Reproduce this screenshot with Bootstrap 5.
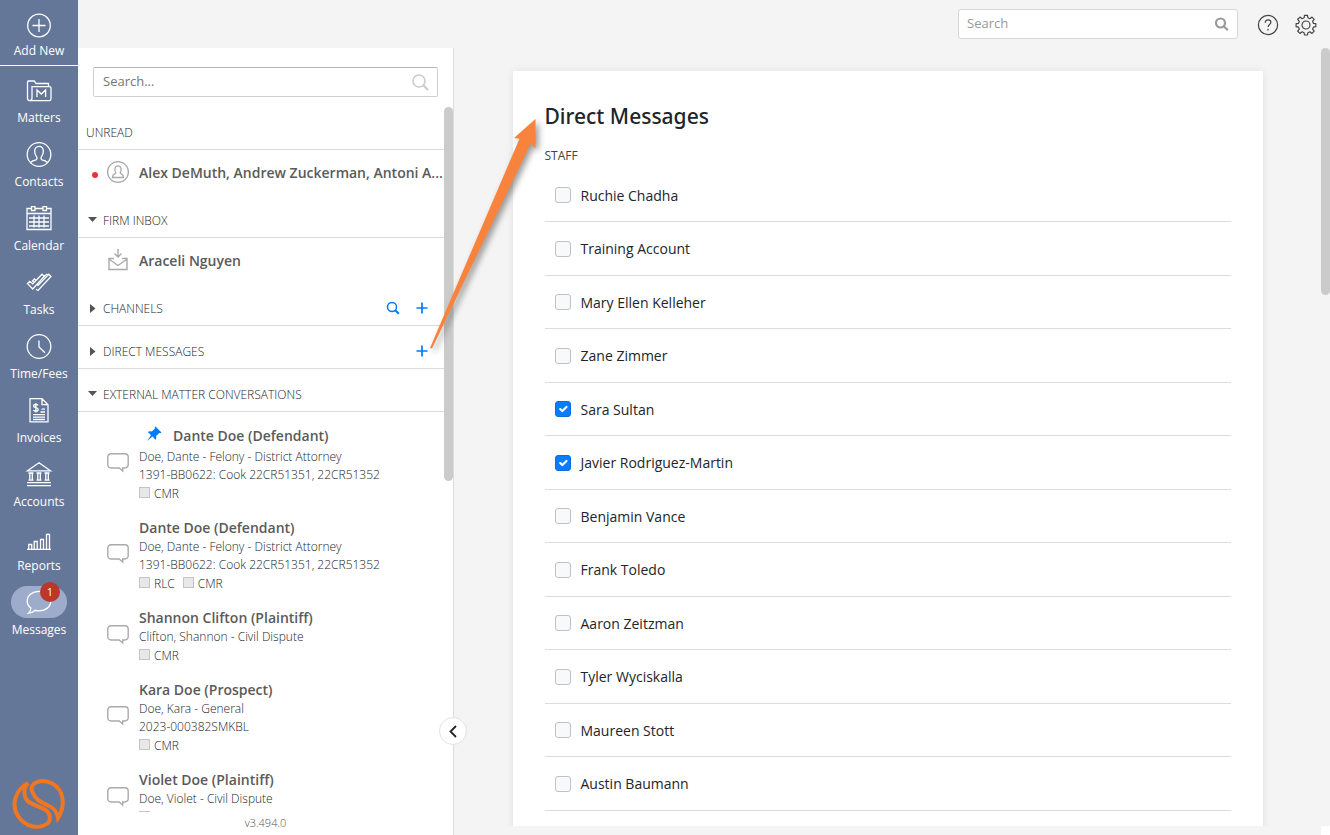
<!DOCTYPE html>
<html lang="en">
<head>
<meta charset="utf-8">
<meta name="viewport" content="width=device-width, initial-scale=1">
<title>Messages</title>
<link href="https://cdn.jsdelivr.net/npm/bootstrap@5.3.0/dist/css/bootstrap.min.css" rel="stylesheet">
<style>
  body { font-family: "Open Sans", "Noto Sans", sans-serif; font-size: 14px; background: #f4f4f4; color: #212529; }
  svg { display: block; }
  a { color: inherit; text-decoration: none; }

  /* navigation rail */
  .rail { width: 78px; background: #657798; color: #fff; }
  .rail a { font-size: 12px; line-height: 18px; height: 64px; padding-top: 6px; }
  .rail a .glyph { height: 31px; }
  .rail .add-new { height: 66px; border-bottom: 1px solid #fff; padding-top: 11px; margin-bottom: 6px; }
  .rail svg { fill: none; stroke: #fff; stroke-width: 1.3; }
  .rail .glyph-pill { width: 56px; height: 32px; border-radius: 16px; background: #9eaccc; margin: -4px 0 3px; }
  .rail .unread-count { width: 20px; height: 20px; border-radius: 50%; background: #bb372b; font-size: 11px; line-height: 20px; top: -4px; right: 7px; }
  .rail .logo { padding-bottom: 5px; }
  .rail .logo svg { stroke: #f0761f; stroke-width: 4; }

  /* top bar */
  .topbar { height: 48px; padding: 0 13px 0 0; gap: 16px; color: #444; }
  .topbar .find { width: 280px; height: 30px; border: 1px solid #d6d6d6; border-radius: 3px; background: #fff; padding: 0 8px; margin-right: 3px; }
  .find input { font-size: 13px; outline: 0; min-width: 0; background: none; }
  .find input::placeholder { color: #757575; opacity: 1; }
  .topbar .find input::placeholder { color: #999; }
  .topbar a { padding-top: 2px; }

  /* conversation panel */
  .panel { width: 376px; background: #fff; border-right: 1px solid #dcdcdc; }
  .panel .find { margin: 19px 15px 10px; height: 30px; border: 1px solid #d0d0d0; border-top-color: #b5b5b5; border-radius: 2px; padding: 0 8px 0 9px; }
  .panel-body { width: 366px; min-height: 0; }
  .group-head { height: 43px; border-bottom: 1px solid #dcdcdc; padding: 9px 15px 0 8px; font-size: 12px; font-weight: 300; }
  .caret { width: 17px; color: #555; }
  .icon-btn { color: #007bff; width: 14px; height: 14px; margin-left: 15px; }
  .person { height: 45px; padding: 0 0 0 14px; }
  .convo-name { font-size: 14px; line-height: 16px; font-weight: 600; color: #5a5a5a; }
  .person .figure-slot { width: 47px; padding-left: 16px; }
  .person .dot + .figure-slot { width: 41px; padding-left: 8px; }
  .dot { width: 6px; height: 6px; border-radius: 50%; background: #ef2f3c; }
  .convo { margin-bottom: 17px; font-size: 12px; line-height: 18px; font-weight: 300; padding-left: 29px; }
  .convo .convo-name { padding-bottom: 2px; }
  .convo .bubble { width: 32px; padding-bottom: 6px; }
  .convo .pinned { height: 20px; padding-left: 7px; gap: 11px; }
  .tags { height: 19px; padding-top: 1px; }
  .tag-box { width: 11px; height: 11px; border: 1px solid #c4c4c4; background: #e8e8e8; margin: 0 4px 3px 0; }
  .version { height: 23px; font-size: 11px; font-weight: 300; color: #555; }
  .thumb { width: 9px; border-radius: 5px; background: #cbcbcb; }
  .collapse-btn { width: 28px; height: 28px; border: 1px solid #e2e2e2; border-radius: 50%; background: #fff; right: -14px; bottom: 90px; z-index: 2; padding: 0; }

  /* recipient picker */
  .picker-area { padding: 23px 9px 0 0; margin-bottom: 9px; }
  .picker { max-width: 750px; background: #fff; padding: 30px 32px 60px; box-shadow: 0 0 8px rgba(0,0,0,.08); }
  .picker h1 { font-family: "Noto Sans", "Open Sans", sans-serif; font-size: 21px; line-height: 30px; font-weight: 500; margin: 0; }
  .picker h2 { font-size: 12px; line-height: 18px; font-weight: 400; color: #444; margin: 16px 0 4px; }
  .staff li { height: 53px; border-bottom: 1px solid #dcdcdc; padding-left: 10px; }
  .staff li:nth-child(even) { height: 54px; }
  .staff .form-check-input { width: 16px; height: 16px; margin: 0; border: 1px solid #bcc2c6; border-radius: 3px; background-color: #f7f9fa; }
  .staff .form-check-input:checked { background-color: #0a7cff; border-color: #0a70e0; }
  .staff label { font-size: 14px; padding-left: 10px; }
  .corner { width: 9px; height: 9px; background: #fff; right: 0; bottom: 0; }

  .callout-arrow { left: 422px; top: 110px; z-index: 5; pointer-events: none; filter: drop-shadow(3px 3px 3px rgba(0,0,0,.4)); }
</style>
</head>
<body>
<svg class="d-none" aria-hidden="true">
  <symbol id="bubble" viewBox="0 0 22 20"><path d="M4 .75h14a3.2 3.2 0 0 1 3.2 3.2v7.8A3.2 3.2 0 0 1 18 15h-2.300v3l-3.500-3H4a3.200 3.200 0 0 1-3.200-3.200V4A3.200 3.200 0 0 1 4 .75z" fill="none" stroke="#aaa" stroke-width="1.400"/></symbol>
  <symbol id="plus" viewBox="0 0 14 14"><path d="M7 1.500v11M1.500 7h11" stroke="currentColor" stroke-width="1.700" fill="none"/></symbol>
  <symbol id="right" viewBox="0 0 9 9"><path d="M2 0l5.500 4.500L2 9z" fill="currentColor"/></symbol>
  <symbol id="down" viewBox="0 0 9 9"><path d="M0 1h9L4.500 6z" fill="currentColor"/></symbol>
</svg>

<div class="d-flex vh-100 overflow-hidden position-relative">
  <nav class="rail d-flex flex-column flex-shrink-0" aria-label="Main">
    <a href="#" class="add-new d-flex flex-column align-items-center">
      <span class="glyph"><svg width="28" height="28" viewBox="0 0 28 28"><circle cx="14" cy="14.500" r="11.300"/><path d="M14 8v13M7.500 14.500h13"/></svg></span>Add New</a>
    <a href="#" class="d-flex flex-column align-items-center"><span class="glyph"><svg width="28" height="26" viewBox="0 0 28 26"><path d="M5.500 22.600h-1a2 2 0 0 1-2-2V4a1 1 0 0 1 1-1h5.800l1.700 2.500h12.500v3"/><path d="M7 8.600h17.500a1.500 1.500 0 0 1 1.500 1.500v11a1.500 1.500 0 0 1-1.500 1.500h-20q2.500 0 2.500-2.500zM12 19v-7l4.300 4 4.300-4v7"/></svg></span>Matters</a>
    <a href="#" class="d-flex flex-column align-items-center"><span class="glyph"><svg width="28" height="26" viewBox="0 0 28 26"><circle cx="14" cy="12.500" r="11.800"/><path d="M5.500 20.500q2-2 5.500-2.700c1.300-.3 1.200-2.400.2-3.600-1.200-1.500-1.500-3-1.500-5 0-3 1.800-4.900 4.300-4.900s4.300 1.900 4.300 4.900c0 2-.3 3.500-1.500 5-1 1.200-1.100 3.300.2 3.600q3.500.7 5.500 2.700"/></svg></span>Contacts</a>
    <a href="#" class="d-flex flex-column align-items-center"><span class="glyph"><svg width="28" height="26" viewBox="0 0 28 26"><path d="M6.500 2.500H2v21h24v-21h-4.500M10 2.500h8M2 7.500h24M6.500.700H10v3.800H6.500zM18 .700h3.500v3.800H18zM4 12h20M4 16h20M4 20h20M9 9.500v12M14 9.500v12M19 9.500v12"/></svg></span>Calendar</a>
    <a href="#" class="d-flex flex-column align-items-center"><span class="glyph"><svg width="28" height="26" viewBox="0 0 28 26"><path d="M2.500 13.500l2.300-2.200 2.900 2.600L17 4.200l2.200 2.200L7.700 19zM11 19.200l2 1.300L26 6.500l-2.300-2.300-10.600 11.200-1.600-1.500M9 12.500L7.500 11 9.500 9l1.500 1.400M19.200 6.400l2.300-2.200 1.500.8"/></svg></span>Tasks</a>
    <a href="#" class="d-flex flex-column align-items-center"><span class="glyph"><svg width="28" height="26" viewBox="0 0 28 26"><circle cx="14" cy="12.500" r="11.800"/><path d="M14 6.500V13l6 5.800"/></svg></span>Time/Fees</a>
    <a href="#" class="d-flex flex-column align-items-center"><span class="glyph"><svg width="28" height="26" viewBox="0 0 28 26"><path d="M5 .700h12l6 6v17.200H5zM17 .700v6h6M8 16.700h12M8 19.200h12M8 21.500h12M15.500 14H20M16.500 11.200H20M13.200 7.400q-1-1-2.400-1c-1.400 0-2.200.7-2.200 1.600 0 2.300 4.600 1.100 4.600 3.400 0 1-.9 1.700-2.300 1.700q-1.600 0-2.600-1M10.900 4.900v9.700"/></svg></span>Invoices</a>
    <a href="#" class="d-flex flex-column align-items-center"><span class="glyph"><svg width="28" height="26" viewBox="0 0 28 26"><path d="M2.500 8.800L14 .800l11.500 8zM2 20.700h24M2 23.700h24M3.500 11h5M11.500 11h5M19.500 11h5M3.500 18.200h5M11.500 18.200h5M19.500 18.200h5M4.800 11v7M7.300 11v7M12.800 11v7M15.300 11v7M20.800 11v7M23.300 11v7"/></svg></span>Accounts</a>
    <a href="#" class="d-flex flex-column align-items-center"><span class="glyph"><svg width="28" height="26" viewBox="0 0 28 26"><path d="M2 23.400h24M3.700 23v-4.500h3V23M9.200 23v-7.500h3V23M15.500 23v-9.500h3V23M21.500 23V8.300h3V23"/></svg></span>Reports</a>
    <a href="#" class="d-flex flex-column align-items-center" aria-current="page"><span class="glyph-pill flex-shrink-0 position-relative d-flex justify-content-center align-items-center"><svg width="28" height="26" viewBox="0 0 28 26"><path d="M3.500 24.200q2.400-2 2.300-5.200C3.600 17.200 2.200 15 2.200 12.200 2.200 6.500 7.500 2.300 14 2.300s11.800 4 11.800 9.800S20.500 21.800 14 21.800q-2 0-3.800-.5-2.700 2.600-6.700 2.900z"/></svg><span class="unread-count position-absolute text-center">1</span></span>Messages</a>
    <div class="logo mt-auto d-flex justify-content-center"><svg width="54" height="52" viewBox="0 0 54 52"><path d="M16 5C3 12-1 27 6 38c7 11 21 14 30 7 3-3 2-9-1-12-5-4-12-5-18-9C11 20 11 10 16 5z"/><path d="M21 15c-3-5-1-9 4-11 10-3 20 2 24 11 3 8 2 17-3 25-1-6-4-10-9-12-6-3-13-5-16-13z"/></svg></div>
  </nav>

  <div class="d-flex flex-column flex-grow-1 overflow-hidden">
    <header class="topbar d-flex align-items-center justify-content-end flex-shrink-0">
      <label class="find d-flex align-items-center"><input class="border-0 p-0 flex-grow-1" type="search" placeholder="Search" aria-label="Search everything">
        <svg width="15" height="15" viewBox="0 0 15 15" fill="none" stroke="#999" stroke-width="2.200"><circle cx="6.500" cy="6" r="4.500"/><path d="M9.800 9.300l4 4"/></svg></label>
      <a href="#" aria-label="Help"><svg width="22" height="22" viewBox="0 0 22 22" fill="none" stroke="currentColor" stroke-width="1.200"><circle cx="11" cy="11" r="9.600"/><path d="M8.200 8.700c0-1.800 1.200-2.900 2.900-2.900s2.800 1 2.800 2.500c0 2.200-2.800 2.200-2.800 4.800M11 14.800v1.600"/></svg></a>
      <a href="#" aria-label="Settings"><svg width="22" height="22" viewBox="0 0 22 22" fill="none" stroke="currentColor" stroke-width="1.200" stroke-linejoin="round"><circle cx="11" cy="11" r="4"/><path d="M9.500 1.300h3l.4 2.500 2 .9 2.100-1.600 2.200 2.200-1.600 2.100.9 2 2.300.3v3l-2.300.4-.9 2 1.600 2.100-2.200 2.200-2.100-1.600-2 .9-.4 2.300h-3l-.4-2.300-2-.9L5 19.400l-2.300-2.200 1.600-2.100-.9-2-2.300-.4v-3l2.300-.3.9-2L2.700 5.300 5 3.100l2.100 1.600 2-.9z"/></svg></a>
    </header>

    <div class="d-flex flex-grow-1" style="min-height:0">
      <aside class="panel d-flex flex-column flex-shrink-0 position-relative">
        <label class="find d-flex align-items-center flex-shrink-0"><input class="border-0 p-0 flex-grow-1" type="search" placeholder="Search..." aria-label="Search conversations">
          <svg width="18" height="18" viewBox="0 0 18 18" fill="none" stroke="#ccc" stroke-width="1.600"><circle cx="8" cy="8" r="6"/><path d="M12.300 12.300l4.700 4.700" stroke-width="2.200"/></svg></label>
        <div class="panel-body flex-grow-1 overflow-hidden">
          <div class="group-head d-flex align-items-center">UNREAD</div>
          <div class="person d-flex align-items-center">
            <span class="dot flex-shrink-0 mt-1"></span>
            <span class="figure-slot flex-shrink-0"><svg width="24" height="24" viewBox="0 0 24 24" fill="none" stroke="#aaa" stroke-width="1.300"><circle cx="12" cy="11" r="10.400"/><path d="M6.500 16.500c0-2.500 1.200-3.300 2.800-4 .9-.4.500-1 0-1.800-.7-1.200-.9-5.800 2.700-5.800s3.400 4.600 2.700 5.800c-.5.8-.9 1.400 0 1.800 1.600.7 2.800 1.500 2.800 4z"/></svg></span>
            <span class="convo-name text-nowrap">Alex DeMuth, Andrew Zuckerman, Antoni A...</span>
          </div>
          <div class="group-head d-flex align-items-center"><svg class="caret" width="17" height="9"><use href="#down" width="9" height="9" x="2"/></svg>FIRM INBOX</div>
          <div class="person d-flex align-items-center">
            <span class="figure-slot flex-shrink-0"><svg width="20" height="24" viewBox="0 0 20 24" fill="none" stroke="#aaa" stroke-width="1.400"><path d="M6 9.500H1v11h18v-11h-5M1.500 10.500L10 16.500l8.500-6M10 0v8M6.500 4.500L10 8l3.500-3.500"/></svg></span>
            <span class="convo-name">Araceli Nguyen</span>
          </div>
          <div class="group-head d-flex align-items-center"><svg class="caret" width="17" height="9"><use href="#right" width="9" height="9" x="2"/></svg>CHANNELS
            <button class="icon-btn btn p-0 border-0 ms-auto" aria-label="Find channel"><svg width="14" height="14" viewBox="0 0 14 14" fill="none" stroke="currentColor" stroke-width="1.500"><circle cx="6" cy="5" r="4.500"/><path d="M9.300 8.300l3.500 3.500" stroke-width="2"/></svg></button>
            <button class="icon-btn btn p-0 border-0" aria-label="Add channel"><svg width="14" height="14" viewBox="0 1 14 14"><use href="#plus" width="14" height="14"/></svg></button></div>
          <div class="group-head d-flex align-items-center"><svg class="caret" width="17" height="9"><use href="#right" width="9" height="9" x="2"/></svg>DIRECT MESSAGES
            <button class="icon-btn btn p-0 border-0 ms-auto" aria-label="New direct message"><svg width="14" height="14" viewBox="0 1 14 14"><use href="#plus" width="14" height="14"/></svg></button></div>
          <div class="group-head d-flex align-items-center mb-3"><svg class="caret" width="17" height="9"><use href="#down" width="9" height="9" x="2"/></svg>EXTERNAL MATTER CONVERSATIONS</div>

          <div class="convo d-flex align-items-center">
            <span class="bubble"><svg width="22" height="20"><use href="#bubble"/></svg></span>
            <div><div class="pinned d-flex align-items-start"><svg width="16" height="14" viewBox="0 2 16 14" fill="#007bff" overflow="visible"><path d="M9.500.5l6 6-1.200.7-1.100-.3-3.100 3.100c.5 1.500.3 2.800-.6 3.700L6.500 10.600 1 15l4-5.800-3.200-3.100c1-.9 2.500-1.200 4-.6l3.200-3-.3-1.200z"/></svg><span class="convo-name">Dante Doe (Defendant)</span></div>
              <div>Doe, Dante - Felony - District Attorney</div><div>1391-BB0622: Cook 22CR51351, 22CR51352</div>
              <div class="tags d-flex align-items-center"><span class="tag-box"></span>CMR</div></div>
          </div>
          <div class="convo d-flex align-items-center">
            <span class="bubble"><svg width="22" height="20"><use href="#bubble"/></svg></span>
            <div><div class="convo-name">Dante Doe (Defendant)</div>
              <div>Doe, Dante - Felony - District Attorney</div><div>1391-BB0622: Cook 22CR51351, 22CR51352</div>
              <div class="tags d-flex align-items-center"><span class="tag-box"></span>RLC<span class="tag-box ms-2"></span>CMR</div></div>
          </div>
          <div class="convo d-flex align-items-center">
            <span class="bubble"><svg width="22" height="20"><use href="#bubble"/></svg></span>
            <div><div class="convo-name">Shannon Clifton (Plaintiff)</div>
              <div>Clifton, Shannon - Civil Dispute</div>
              <div class="tags d-flex align-items-center"><span class="tag-box"></span>CMR</div></div>
          </div>
          <div class="convo d-flex align-items-center">
            <span class="bubble"><svg width="22" height="20"><use href="#bubble"/></svg></span>
            <div><div class="convo-name">Kara Doe (Prospect)</div>
              <div>Doe, Kara - General</div><div>2023-000382SMKBL</div>
              <div class="tags d-flex align-items-center"><span class="tag-box"></span>CMR</div></div>
          </div>
          <div class="convo d-flex align-items-center">
            <span class="bubble"><svg width="22" height="20"><use href="#bubble"/></svg></span>
            <div><div class="convo-name">Violet Doe (Plaintiff)</div>
              <div>Doe, Violet - Civil Dispute</div>
              <div class="tags d-flex align-items-center"><span class="tag-box"></span></div></div>
          </div>
        </div>
        <div class="version d-flex justify-content-center align-items-center flex-shrink-0">v3.494.0</div>
        <div class="thumb position-absolute end-0" style="top:59px;height:374px"></div>
        <button class="collapse-btn position-absolute d-flex align-items-center justify-content-center" aria-label="Collapse panel"><svg width="8" height="13" viewBox="0 0 8 13" fill="none" stroke="#222" stroke-width="1.800"><path d="M7 1L1.500 6.500 7 12"/></svg></button>
      </aside>

      <main class="flex-grow-1 position-relative d-flex flex-column overflow-hidden">
        <div class="picker-area flex-grow-1 overflow-hidden">
          <section class="picker mx-auto">
            <h1>Direct Messages</h1>
            <h2>STAFF</h2>
            <ul class="staff list-unstyled m-0">
              <li class="d-flex align-items-center"><input class="form-check-input" type="checkbox" id="s1"><label for="s1">Ruchie Chadha</label></li>
              <li class="d-flex align-items-center"><input class="form-check-input" type="checkbox" id="s2"><label for="s2">Training Account</label></li>
              <li class="d-flex align-items-center"><input class="form-check-input" type="checkbox" id="s3"><label for="s3">Mary Ellen Kelleher</label></li>
              <li class="d-flex align-items-center"><input class="form-check-input" type="checkbox" id="s4"><label for="s4">Zane Zimmer</label></li>
              <li class="d-flex align-items-center"><input class="form-check-input" type="checkbox" id="s5" checked><label for="s5">Sara Sultan</label></li>
              <li class="d-flex align-items-center"><input class="form-check-input" type="checkbox" id="s6" checked><label for="s6">Javier Rodriguez-Martin</label></li>
              <li class="d-flex align-items-center"><input class="form-check-input" type="checkbox" id="s7"><label for="s7">Benjamin Vance</label></li>
              <li class="d-flex align-items-center"><input class="form-check-input" type="checkbox" id="s8"><label for="s8">Frank Toledo</label></li>
              <li class="d-flex align-items-center"><input class="form-check-input" type="checkbox" id="s9"><label for="s9">Aaron Zeitzman</label></li>
              <li class="d-flex align-items-center"><input class="form-check-input" type="checkbox" id="s10"><label for="s10">Tyler Wyciskalla</label></li>
              <li class="d-flex align-items-center"><input class="form-check-input" type="checkbox" id="s11"><label for="s11">Maureen Stott</label></li>
              <li class="d-flex align-items-center"><input class="form-check-input" type="checkbox" id="s12"><label for="s12">Austin Baumann</label></li>
            </ul>
          </section>
        </div>
        <div class="thumb position-absolute top-0 end-0" style="height:247px"></div>
        <div class="corner position-absolute"></div>
      </main>
    </div>
  </div>

  <svg class="callout-arrow position-absolute" width="124" height="248" viewBox="422 110 124 248" aria-hidden="true"><path d="M535.500 119L514 138l5.500.7L430 348l2 .5 98.700-205 4.800 4.800z" fill="#f9833c"/></svg>
</div>
<script src="https://cdn.jsdelivr.net/npm/bootstrap@5.3.0/dist/js/bootstrap.bundle.min.js"></script>
</body>
</html>
